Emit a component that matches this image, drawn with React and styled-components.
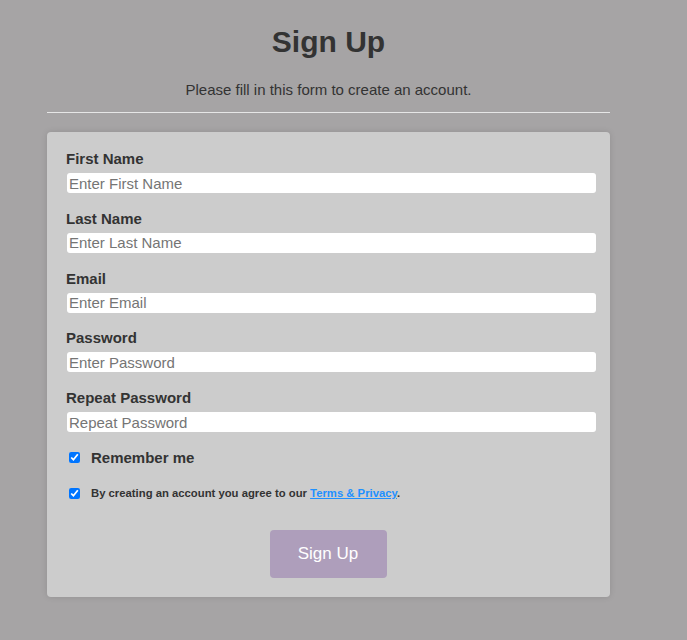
import React from "react";
import styled, { createGlobalStyle } from "styled-components";

const Global = createGlobalStyle`
  html, body { margin: 0; padding: 0; }
  body {
    background: #a6a4a5;
    font-family: "Liberation Sans", Arial, sans-serif;
    color: #333;
    min-height: 640px;
  }
`;

const Page = styled.div`
  width: 563px;
  margin-left: 47px;
  padding-top: 25px;
`;

const Title = styled.h1`
  margin: 0;
  text-align: center;
  font-size: 30px;
  line-height: 34px;
  font-weight: bold;
  color: #333;
`;

const Subtitle = styled.p`
  margin: 22px 0 0;
  text-align: center;
  font-size: 15px;
  line-height: 18px;
  color: #333;
`;

const Rule = styled.hr`
  margin: 13px 0 0;
  border: 0;
  border-top: 1px solid #e6e6e6;
  height: 0;
`;

const Card = styled.form`
  margin-top: 19px;
  background: #cccccc;
  border-radius: 4px;
  box-shadow: 0 0 6px rgba(0, 0, 0, 0.12);
  padding: 18px 20px 19px 19px;
  display: flex;
  flex-direction: column;
`;

const Field = styled.div`
  display: flex;
  flex-direction: column;
  margin-bottom: ${(p) => p.$mb}px;
`;

const Label = styled.label`
  font-weight: bold;
  font-size: 15px;
  line-height: 17px;
  color: #333;
  margin-bottom: 6px;
`;

const Input = styled.input`
  box-sizing: border-box;
  width: 529px;
  margin-left: 1px;
  height: 20px;
  border: 0;
  border-radius: 3px;
  background: #fff;
  padding: 0 2px;
  font-family: "Liberation Sans", Arial, sans-serif;
  font-size: 15px;
  color: #333;
  outline: none;
  &::placeholder { color: #757575; }
`;

const CheckRow = styled.label`
  display: flex;
  align-items: center;
  margin-left: 3px;
  margin-top: ${(p) => p.$mt}px;
  font-weight: bold;
  font-size: ${(p) => p.$size}px;
  color: #333;
`;

const Box = styled.input`
  margin: 0 ${(p) => p.$gap}px 0 0;
  width: 11px;
  height: 11px;
  accent-color: #0075ff;
`;

const Link = styled.a`
  color: #1e90ff;
  text-decoration: underline;
`;

const Actions = styled.div`
  display: flex;
  justify-content: center;
  margin-top: 30.5px;
`;

const Button = styled.button`
  width: 117px;
  height: 48px;
  border: 0;
  border-radius: 4px;
  background: #ae9ebb;
  color: #fff;
  font-family: "Liberation Sans", Arial, sans-serif;
  font-size: 17px;
  cursor: pointer;
`;

const fields = [
  ["First Name", "Enter First Name", "text"],
  ["Last Name", "Enter Last Name", "text"],
  ["Email", "Enter Email", "email"],
  ["Password", "Enter Password", "password"],
  ["Repeat Password", "Repeat Password", "password"],
];

export default function App() {
  return (
    <>
      <Global />
      <Page>
        <Title>Sign Up</Title>
        <Subtitle>Please fill in this form to create an account.</Subtitle>
        <Rule />
        <Card onSubmit={(e) => e.preventDefault()}>
          {fields.map(([label, ph, type], i) => (
            <Field key={label} $mb={i === fields.length - 1 ? 0 : 16.75}>
              <Label>{label}</Label>
              <Input type={type} placeholder={ph} />
            </Field>
          ))}
          <CheckRow $mt={17} $size={15}>
            <Box type="checkbox" defaultChecked $gap={11} />
            Remember me
          </CheckRow>
          <CheckRow $mt={21} $size={11.3}>
            <Box type="checkbox" defaultChecked $gap={11} />
            <span>
              By creating an account you agree to our <Link href="#">Terms &amp; Privacy</Link>.
            </span>
          </CheckRow>
          <Actions>
            <Button type="submit">Sign Up</Button>
          </Actions>
        </Card>
      </Page>
    </>
  );
}
